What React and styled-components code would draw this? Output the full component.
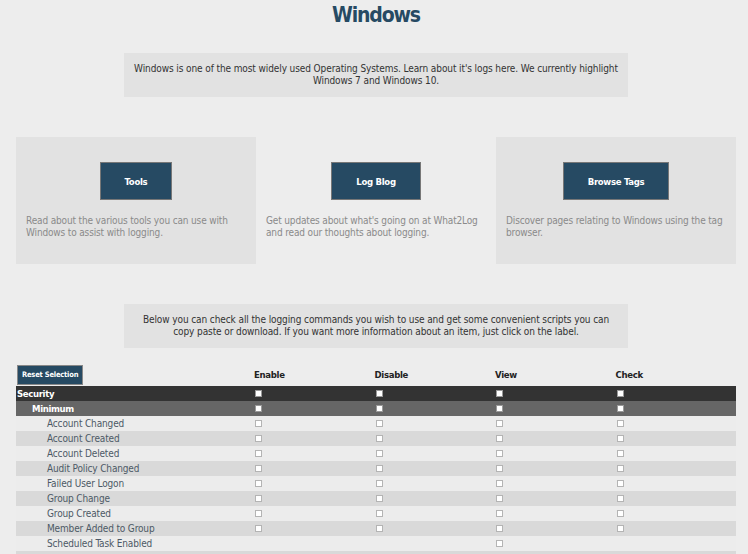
import React from "react";
import styled, { createGlobalStyle } from "styled-components";

const GlobalStyle = createGlobalStyle`
  html, body {
    margin: 0;
    padding: 0;
    background: #ededed;
  }
  body {
    font-family: "DejaVu Sans Condensed", "Liberation Sans", sans-serif;
    color: #333;
    overflow: hidden;
  }
`;

const Page = styled.div`
  width: 752px;
  display: flex;
  flex-direction: column;
  align-items: center;
`;

const Title = styled.h1`
  margin: 0;
  padding-top: 1px;
  font-size: 21px;
  line-height: 28px;
  font-weight: bold;
  letter-spacing: -1.15px;
  color: #264a63;
`;

const Notice = styled.div`
  width: 504px;
  box-sizing: border-box;
  margin-top: ${(p) => p.$top}px;
  padding: 10px 8px;
  background: #e2e2e2;
  font-size: 10px;
  line-height: 12px;
  letter-spacing: -0.1px;
  text-align: center;
  color: #333;
`;

const Cards = styled.div`
  width: 720px;
  margin-top: 40px;
  display: grid;
  grid-template-columns: repeat(3, 1fr);
`;

const Card = styled.div`
  height: 127px;
  box-sizing: border-box;
  padding: 25px 10px 0;
  background: ${(p) => (p.$shaded ? "#e2e2e2" : "transparent")};
  display: flex;
  flex-direction: column;
  align-items: center;
`;

const Button = styled.button`
  height: 38px;
  padding: 0 24px;
  background: #264a63;
  border: 1px solid #777;
  color: #fff;
  font-family: inherit;
  font-size: 9.5px;
  letter-spacing: -0.3px;
  font-weight: bold;
`;

const CardText = styled.p`
  align-self: stretch;
  margin: 15px -6px 0 0;
  font-size: 10px;
  line-height: 12px;
  letter-spacing: -0.15px;
  color: #8a8a8a;
`;

const Table = styled.div`
  width: 720px;
  margin-top: 16px;
`;

const Row = styled.div`
  display: grid;
  grid-template-columns: 238px repeat(4, 1fr);
  align-items: center;
  height: ${(p) => (p.$head ? 22 : 15)}px;
  background: ${(p) => p.$bg || "transparent"};
  color: ${(p) => p.$color || "#4d5966"};
  font-size: ${(p) => (p.$bold ? 9.5 : 10)}px;
  font-weight: ${(p) => (p.$bold ? "bold" : "normal")};
`;

const Label = styled.div`
  padding-left: ${(p) => p.$indent + 1}px;
  letter-spacing: ${(p) => (p.$bold ? -0.35 : -0.15)}px;
  white-space: nowrap;
`;

const HeadCell = styled.div`
  font-size: 9.5px;
  letter-spacing: -0.3px;
  font-weight: bold;
  color: #222;
  padding-bottom: 2px;
`;

const Cell = styled.div`
  display: flex;
  align-items: center;
  padding-left: 1px;
`;

const Box = styled.span`
  width: 5px;
  height: 5px;
  background: #fff;
  border: 1px solid ${(p) => (p.$strong ? "#999" : "#b4b4b4")};
`;

const ResetButton = styled.button`
  justify-self: start;
  margin-left: 1px;
  margin-bottom: 1px;
  height: 20px;
  padding: 0 4px;
  background: #264a63;
  border: 1px solid #888;
  color: #fff;
  font-family: inherit;
  font-size: 7.5px;
  letter-spacing: -0.2px;
  font-weight: bold;
`;

const cards = [
  {
    label: "Tools",
    text: "Read about the various tools you can use with Windows to assist with logging.",
    shaded: true
  },
  {
    label: "Log Blog",
    text: "Get updates about what's going on at What2Log and read our thoughts about logging.",
    shaded: false
  },
  {
    label: "Browse Tags",
    text: "Discover pages relating to Windows using the tag browser.",
    shaded: true
  }
];

const items = [
  ["Account Changed", [1, 1, 1, 1]],
  ["Account Created", [1, 1, 1, 1]],
  ["Account Deleted", [1, 1, 1, 1]],
  ["Audit Policy Changed", [1, 1, 1, 1]],
  ["Failed User Logon", [1, 1, 1, 1]],
  ["Group Change", [1, 1, 1, 1]],
  ["Group Created", [1, 1, 1, 1]],
  ["Member Added to Group", [1, 1, 1, 1]],
  ["Scheduled Task Enabled", [0, 0, 1, 0]],
  ["Scheduled Task Updated", [0, 0, 1, 0]]
];

function Checks({ flags, strong }) {
  return flags.map((f, i) => (
    <Cell key={i}>{f ? <Box $strong={strong} /> : null}</Cell>
  ));
}

export default function App() {
  return (
    <Page>
      <GlobalStyle />
      <Title>Windows</Title>
      <Notice $top={24}>
        Windows is one of the most widely used Operating Systems. Learn about
        it's logs here. We currently highlight Windows 7 and Windows 10.
      </Notice>

      <Cards>
        {cards.map((c) => (
          <Card key={c.label} $shaded={c.shaded}>
            <Button>{c.label}</Button>
            <CardText>{c.text}</CardText>
          </Card>
        ))}
      </Cards>

      <Notice $top={40}>
        Below you can check all the logging commands you wish to use and get
        some convenient scripts you can copy paste or download. If you want
        more information about an item, just click on the label.
      </Notice>

      <Table>
        <Row $head>
          <ResetButton>Reset Selection</ResetButton>
          <HeadCell>Enable</HeadCell>
          <HeadCell>Disable</HeadCell>
          <HeadCell>View</HeadCell>
          <HeadCell>Check</HeadCell>
        </Row>
        <Row $bg="#333" $color="#fff" $bold>
          <Label $indent={0} $bold>Security</Label>
          <Checks flags={[1, 1, 1, 1]} strong />
        </Row>
        <Row $bg="#666" $color="#fff" $bold>
          <Label $indent={15} $bold>Minimum</Label>
          <Checks flags={[1, 1, 1, 1]} strong />
        </Row>
        {items.map(([name, flags], i) => (
          <Row key={name} $bg={i % 2 ? "#d9d9d9" : "#ececec"}>
            <Label $indent={30}>{name}</Label>
            <Checks flags={flags} />
          </Row>
        ))}
      </Table>
    </Page>
  );
}
